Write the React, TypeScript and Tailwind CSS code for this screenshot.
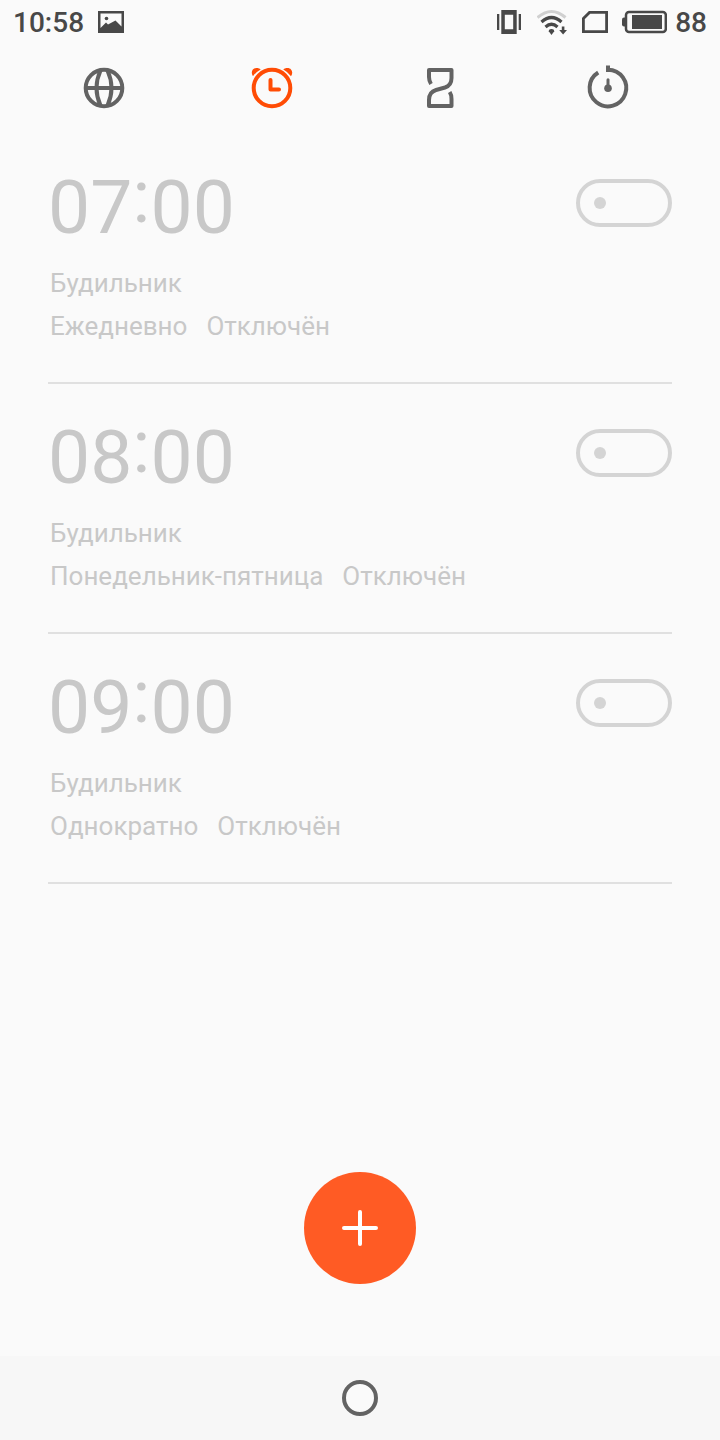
import { useState } from 'react'

interface Alarm {
  id: number
  hours: string
  minutes: string
  label: string
  repeat: string
  enabled: boolean
}

const INITIAL_ALARMS: Alarm[] = [
  { id: 1, hours: '07', minutes: '00', label: 'Будильник', repeat: 'Ежедневно', enabled: false },
  { id: 2, hours: '08', minutes: '00', label: 'Будильник', repeat: 'Понедельник-пятница', enabled: false },
  { id: 3, hours: '09', minutes: '00', label: 'Будильник', repeat: 'Однократно', enabled: false },
]

const TABS = [
  { id: 'world', label: 'Мировое время', Icon: GlobeIcon },
  { id: 'alarm', label: 'Будильник', Icon: AlarmIcon },
  { id: 'timer', label: 'Таймер', Icon: HourglassIcon },
  { id: 'stopwatch', label: 'Секундомер', Icon: StopwatchIcon },
]

export default function App() {
  const [tab, setTab] = useState('alarm')
  const [alarms, setAlarms] = useState(INITIAL_ALARMS)

  const toggle = (id: number) =>
    setAlarms(list => list.map(a => (a.id === id ? { ...a, enabled: !a.enabled } : a)))

  return (
    <div className="flex min-h-screen flex-col bg-[#fafafa] font-['Roboto',sans-serif]">
      <StatusBar />

      <nav className="grid h-[90px] grid-cols-4 pr-7 pl-5">
        {TABS.map(({ id, label, Icon }) => (
          <button
            key={id}
            type="button"
            aria-label={label}
            aria-current={tab === id ? 'page' : undefined}
            onClick={() => setTab(id)}
            className={`flex justify-center pt-5 ${tab === id ? 'text-[#ff4c05]' : 'text-[#636363]'}`}
          >
            <Icon />
          </button>
        ))}
      </nav>

      <main className="flex flex-1 flex-col">
        <ul className="px-12">
          {alarms.map(alarm => (
            <AlarmRow key={alarm.id} alarm={alarm} onToggle={() => toggle(alarm.id)} />
          ))}
        </ul>

        <div className="mt-auto flex justify-center pt-12 pb-[72px]">
          <button
            type="button"
            aria-label="Добавить будильник"
            className="flex size-28 items-center justify-center rounded-full bg-[#ff5b24] text-white"
          >
            <svg className="size-9" viewBox="0 0 36 36" fill="none" stroke="currentColor" strokeWidth="4" strokeLinecap="round">
              <path d="M18 2v32M2 18h32" />
            </svg>
          </button>
        </div>
      </main>

      {/* System navigation */}
      <footer className="flex h-[84px] items-center justify-center bg-[#f7f7f7]">
        <button type="button" aria-label="Домой" className="size-9 rounded-full border-4 border-[#636363] bg-[#fafafa]" />
      </footer>
    </div>
  )
}

function AlarmRow({ alarm, onToggle }: { alarm: Alarm; onToggle: () => void }) {
  const tone = alarm.enabled ? 'text-[#333333]' : 'text-[#c8c8c8]'

  return (
    <li className="flex h-[250px] items-start justify-between border-b-2 border-[#e0e0e0] pt-[45px]">
      <div className={tone}>
        <div className="flex text-[75px] leading-[56px]">
          <span>{alarm.hours}</span>
          <span className="-mt-[11px]">:</span>
          <span>{alarm.minutes}</span>
        </div>
        <div className="mt-[27px] pl-0.5 text-[26px] leading-[43px]">
          <p>{alarm.label}</p>
          <p className="flex gap-[19px]">
            <span>{alarm.repeat}</span>
            <span>{alarm.enabled ? 'Включён' : 'Отключён'}</span>
          </p>
        </div>
      </div>
      <input
        type="checkbox"
        role="switch"
        aria-label={`${alarm.label} ${alarm.hours}:${alarm.minutes}`}
        checked={alarm.enabled}
        onChange={onToggle}
        className="flex h-12 w-24 shrink-0 appearance-none items-center rounded-full border-4 border-[#d4d4d4] px-[14px] before:size-3 before:rounded-full before:bg-[#d4d4d4] checked:justify-end checked:border-[#ff5b24] checked:before:bg-[#ff5b24]"
      />
    </li>
  )
}

function StatusBar() {
  return (
    <header className="flex h-11 items-center justify-between px-[13px] text-[28px] leading-[33px] font-medium text-[#484848]">
      <div className="flex items-center gap-[14px]">
        <span>10:58</span>
        <svg className="h-[22px] w-[26px]" viewBox="0 0 26 22" fill="currentColor">
          <path fillRule="evenodd" d="M0 0h26v22H0zM2.500 2.500v14.500L8 11.500l2 2L17.500 9.500l6 6V2.500z" />
          <circle cx="8.500" cy="7.500" r="1.800" />
        </svg>
      </div>
      <div className="flex items-center">
        {/* Vibrate */}
        <svg className="h-6 w-6" viewBox="0 0 24 24" fill="currentColor">
          <path fillRule="evenodd" d="M4.300 0h15.400v24H4.300zM7.800 4.800v14.400h8.400V4.800z" />
          <path d="M0 4h2.300v16H0zM21.700 4H24v16h-2.300z" />
        </svg>
        {/* Wi-Fi */}
        <svg className="ml-4 h-[26px] w-[30px]" viewBox="0 0 30 26" fill="none" stroke="currentColor">
          <path d="M.500 8.500Q14.500-3.500 28.500 8.500" stroke="#d0d0d0" strokeWidth="3" />
          <path d="M4.500 13Q14.500 4 24.500 13" strokeWidth="3.200" />
          <path d="M8.500 18Q14.500 12.500 20.500 18" strokeWidth="3.200" />
          <path d="M14.500 20q2.700 0 2.700 2.200L14.500 26l-2.700-3.800Q11.800 20 14.500 20z" fill="currentColor" stroke="none" />
          <path d="M24.800 17.500h2.600V21H30l-3.900 4.500-3.900-4.500h2.600z" fill="currentColor" stroke="none" />
        </svg>
        {/* SIM */}
        <svg className="ml-[15px] h-[22px] w-[26px]" viewBox="0 0 26 22" fill="none" stroke="currentColor" strokeWidth="2.800">
          <path d="M1.400 7.500 7.500 1.400h17.100v19.200H1.400z" />
        </svg>
        {/* Battery */}
        <svg className="ml-[14px] h-6 w-[45px]" viewBox="0 0 45 24" fill="none">
          <path d="M3.500 7.500H2Q0 7.500 0 9.500v5Q0 16.500 2 16.500h1.500z" fill="currentColor" />
          <rect x="4" y="2" width="39.800" height="20" rx="3" stroke="currentColor" strokeWidth="2.500" />
          <path d="M10 5h30v14H10z" fill="currentColor" />
        </svg>
        <span className="ml-2">88</span>
      </div>
    </header>
  )
}

function GlobeIcon() {
  return (
    <svg className="size-12" viewBox="0 0 48 48" fill="none" stroke="currentColor" strokeWidth="4">
      <circle cx="24" cy="24" r="18.300" />
      <path d="M5 24h38" strokeWidth="4.200" />
      <path d="M20.500 6.500Q12.500 24 20.500 41.500M27.500 6.500Q35.500 24 27.500 41.500" />
    </svg>
  )
}

function AlarmIcon() {
  return (
    <svg className="size-12" viewBox="0 0 48 48" fill="none" stroke="currentColor" strokeWidth="4">
      <circle cx="24" cy="24" r="18.300" />
      <path d="M22.500 16v9.500H31" strokeLinecap="round" strokeLinejoin="round" />
      <path
        d="M5 12.200C2.500 9 4 4 8.500 4c2 0 3.200.5 4.200 1.500Q8 8 5 12.200zM43 12.200C45.500 9 44 4 39.500 4c-2 0-3.200.5-4.200 1.500Q40 8 43 12.200z"
        fill="currentColor"
        stroke="none"
      />
    </svg>
  )
}

function HourglassIcon() {
  return (
    <svg className="size-12" viewBox="0 0 48 48" fill="none" stroke="currentColor" strokeWidth="4">
      <path
        d="M15 20C13.700 18 13 16 13 13V6h22.500v8c0 5-2 8-6.500 9.500l-9 2.500C15 27.500 13 31 13 36v6h22.500v-7c0-3-.5-5-1.800-7"
        strokeLinejoin="round"
      />
    </svg>
  )
}

function StopwatchIcon() {
  return (
    <svg className="size-12" viewBox="0 0 48 48" fill="none" stroke="currentColor" strokeWidth="4">
      <path d="M24 5.700A18.300 18.300 0 1 1 14.200 8.500" />
      <path d="M24 1.500v6.500" />
      <path d="M24 15.800v8" strokeWidth="3" strokeLinecap="round" />
      <circle cx="24" cy="24.300" r="3.800" fill="currentColor" stroke="none" />
    </svg>
  )
}
